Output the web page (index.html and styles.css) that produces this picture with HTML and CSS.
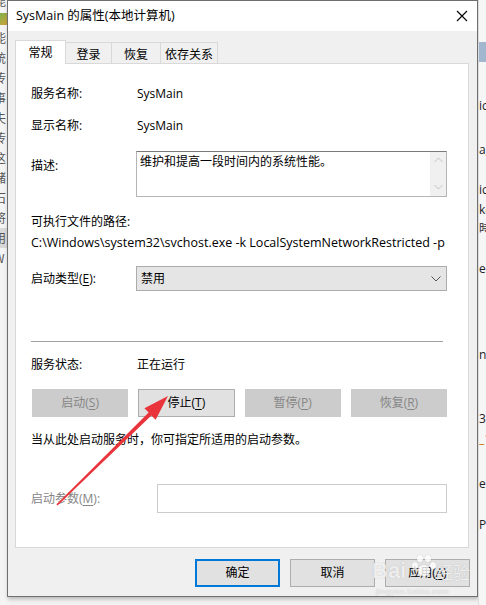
FILE: index.html
```html
<!DOCTYPE html>
<html lang="zh-CN">
<head>
<meta charset="utf-8">
<title>SysMain 的属性(本地计算机)</title>
<link rel="stylesheet" href="styles.css">
</head>
<body>
<div class="screen">
  <div class="bg-left">
    <div class="frag frag-top">能</div>
    <div class="frag-icon"></div>
    <div class="frag">能</div>
    <div class="frag">统</div>
    <div class="frag">传</div>
    <div class="frag">事</div>
    <div class="frag">夫</div>
    <div class="frag">传</div>
    <div class="frag">这</div>
    <div class="frag">储</div>
    <div class="frag">石</div>
    <div class="frag">将</div>
    <div class="frag frag-sel">用</div>
    <div class="frag">W</div>
  </div>

  <div class="dialog">
    <div class="titlebar">
      <span class="title">SysMain 的属性(本地计算机)</span>
      <svg class="close" width="12" height="12" viewBox="0 0 12 12"><path d="M1 1L11 11M11 1L1 11" stroke="#000" stroke-width="1.1" fill="none"/></svg>
    </div>
    <div class="body">
      <div class="tabs">
        <div class="tab tab-active tab-w51">常规</div>
        <div class="tab tab-w46">登录</div>
        <div class="tab tab-w49">恢复</div>
        <div class="tab tab-w57">依存关系</div>
      </div>
      <div class="panel">
        <div class="row r-name"><span class="label">服务名称:</span><span class="value">SysMain</span></div>
        <div class="row r-disp"><span class="label">显示名称:</span><span class="value">SysMain</span></div>
        <div class="row r-desc">
          <span class="label label-desc">描述:</span>
          <div class="textarea">
            <div class="ta-text">维护和提高一段时间内的系统性能。</div>
            <div class="ta-scroll">
              <svg width="9" height="6" viewBox="0 0 9 6"><path d="M0.5 5L4.5 1L8.5 5" stroke="#c2c2c2" fill="none"/></svg>
              <svg width="9" height="6" viewBox="0 0 9 6"><path d="M0.5 1L4.5 5L8.5 1" stroke="#c2c2c2" fill="none"/></svg>
            </div>
          </div>
        </div>
        <div class="row r-pathlabel">可执行文件的路径:</div>
        <div class="row r-path">C:\Windows\system32\svchost.exe -k LocalSystemNetworkRestricted -p</div>
        <div class="row r-type">
          <span class="label">启动类型(<u>E</u>):</span>
          <div class="select">
            <span>禁用</span>
            <svg width="10" height="6" viewBox="0 0 10 6"><path d="M0.5 0.5L5 5L9.5 0.5" stroke="#555" fill="none"/></svg>
          </div>
        </div>
        <div class="separator"></div>
        <div class="row r-status"><span class="label">服务状态:</span><span class="value">正在运行</span></div>
        <div class="btn-row">
          <div class="btn btn-disabled">启动(<u>S</u>)</div>
          <div class="btn">停止(<u>T</u>)</div>
          <div class="btn btn-disabled">暂停(<u>P</u>)</div>
          <div class="btn btn-disabled">恢复(<u>R</u>)</div>
        </div>
        <div class="row r-hint">当从此处启动服务时，你可指定所适用的启动参数。</div>
        <div class="row r-params">
          <span class="label label-params">启动参数(<u>M</u>):</span>
          <div class="input"></div>
        </div>
      </div>
      <div class="footer">
        <div class="btn btn-foot btn-default">确定</div>
        <div class="btn btn-foot">取消</div>
        <div class="btn btn-foot">应用(<u>A</u>)</div>
      </div>
    </div>
  </div>

  <div class="bg-right">
    <div class="rfrag rfrag-blue"></div>
    <div class="rfrag rf1">ic</div>
    <div class="rfrag rf2">ag</div>
    <div class="rfrag rf3">ic</div>
    <div class="rfrag rf4">ke</div>
    <div class="rfrag rf5">時</div>
    <div class="rfrag rf6">el</div>
    <div class="rfrag rf7">nc</div>
    <div class="rfrag rf8">3</div>
    <div class="rfrag rf9">_1</div>
    <div class="rfrag rf10">e</div>
    <div class="rfrag rf11">Pi</div>
  </div>
</div>

<svg class="arrow" width="486" height="605" viewBox="0 0 486 605">
  <polygon fill="#e8343a" points="56.4,504.4 148.6,412.6 144.4,408.3 168,396 155.6,419.7 151.4,415.4 57.6,505.6"/>
</svg>

<div class="watermark">
  <span class="wm-bai">Bai</span>
  <span class="wm-paw"><i></i><i></i><i></i><i></i><b></b></span>
  <span class="wm-jy">经验</span>
  <div class="wm-url">jingyan.baidu.com</div>
</div>
</body>
</html>
```

FILE: styles.css
```css
* { box-sizing: border-box; }

html, body {
  margin: 0;
  padding: 0;
}

body {
  width: 486px;
  height: 605px;
  overflow: hidden;
  background: #f2f2f2;
  font-family: "Open Sans", "Noto Sans CJK SC", sans-serif;
  font-size: 12px;
  color: #000;
  position: relative;
}

.screen {
  display: flex;
  height: 605px;
}

/* background app fragments */
.bg-left {
  width: 7px;
  flex: none;
  overflow: hidden;
  background: #f4f4f4;
  display: flex;
  flex-direction: column;
  font-family: "Noto Sans CJK SC", sans-serif;
  font-size: 12px;
  line-height: 20px;
  color: #555;
}
.frag {
  height: 20px;
  margin-left: -6px;
  white-space: nowrap;
}
.frag-top {
  height: 14px;
  line-height: 10px;
  margin-top: -4px;
}
.frag-icon {
  height: 12px;
  margin: 3px 0 3px 0;
  background: linear-gradient(135deg, #7bb24a, #d4a33a);
}
.frag-sel {
  background: #d9d9d9;
}

.bg-right {
  width: 8px;
  flex: none;
  position: relative;
  overflow: hidden;
  background: #f6f6f6;
  border-left: 1px solid #dcdcdc;
  font-family: "Open Sans", "Noto Sans CJK SC", sans-serif;
  font-size: 12px;
  color: #222;
}
.rfrag { position: absolute; left: 0; white-space: nowrap; line-height: 14px; }
.rfrag-blue { top: 42px; height: 20px; width: 8px; background: #a3b6d0; }
.rf1 { top: 99px; }
.rf2 { top: 143px; }
.rf3 { top: 183px; }
.rf4 { top: 203px; }
.rf5 { top: 222px; color: #333; }
.rf6 { top: 262px; }
.rf7 { top: 348px; }
.rf8 { top: 412px; }
.rf9 { top: 432px; color: #c07000; }
.rf10 { top: 477px; }
.rf11 { top: 518px; }

/* dialog */
.dialog {
  width: 471px;
  height: 597px;
  flex: none;
  border: 1px solid #6f6f6f;
  display: flex;
  flex-direction: column;
  background: #f0f0f0;
  box-shadow: 1px 2px 4px rgba(0,0,0,0.25);
}

.titlebar {
  height: 30px;
  flex: none;
  background: #fff;
  display: flex;
  align-items: center;
  justify-content: space-between;
  padding: 0 9px 0 8px;
}
.title {
  font-size: 12.5px;
  line-height: 16px;
  margin-top: -1px;
}
.close { display: block; }

.body {
  flex: 1;
  padding: 9px 8px 9px 7px;
  display: flex;
  flex-direction: column;
}

.tabs {
  height: 23px;
  display: flex;
  align-items: flex-end;
  position: relative;
  z-index: 1;
}
.tab {
  height: 21px;
  border: 1px solid #d9d9d9;
  border-bottom: none;
  border-left: none;
  background: #f0f0f0;
  display: flex;
  align-items: center;
  justify-content: center;
  font-family: "Noto Sans CJK SC", sans-serif;
  font-size: 12px;
  line-height: 16px;
  padding-top: 1px;
}
.tab-active {
  height: 24px;
  margin-bottom: -1px;
  background: #fff;
  border-left: 1px solid #d9d9d9;
  padding-top: 0;
  padding-bottom: 2px;
}
.tab-w51 { width: 51px; }
.tab-w46 { width: 46px; }
.tab-w49 { width: 49px; }
.tab-w57 { width: 57px; }

.panel {
  height: 485px;
  flex: none;
  background: #fff;
  border: 1px solid #d9d9d9;
  padding: 0 21px 0 15px;
  display: flex;
  flex-direction: column;
}

.row {
  display: flex;
  align-items: center;
  line-height: 20px;
  min-height: 20px;
  white-space: nowrap;
}
.label {
  width: 106px;
  flex: none;
}

.r-name { margin-top: 20px; }
.r-disp { margin-top: 12px; }
.r-desc { margin-top: 15px; align-items: flex-start; }
.label-desc { width: 105px; margin-top: 5px; }
.textarea {
  flex: 1;
  height: 46px;
  border: 1px solid #b5b5b5;
  border-top-color: #7a7a7a;
  display: flex;
}
.ta-text {
  flex: 1;
  padding: 2px 0 0 3px;
  line-height: 16px;
}
.ta-scroll {
  width: 16px;
  flex: none;
  background: #f0f0f0;
  display: flex;
  flex-direction: column;
  justify-content: space-between;
  align-items: center;
  padding: 5px 0 6px;
}
.ta-scroll svg { display: block; }

.r-pathlabel { margin-top: 15px; }
.r-path { margin-top: 1px; font-size: 12.5px; }

.r-type { margin-top: 13px; }
.r-type .label { width: 105px; }
.select {
  flex: 1;
  height: 25px;
  background: #e5e5e5;
  border: 1px solid #acacac;
  display: flex;
  align-items: center;
  justify-content: space-between;
  padding: 0 5px 0 4px;
}
.select svg { display: block; }

.separator {
  height: 1px;
  background: #a0a0a0;
  margin: 50px 4px 0 0;
  flex: none;
}

.r-status { margin-top: 13px; }

.btn-row {
  margin-top: 14px;
  display: grid;
  grid-template-columns: repeat(4, 1fr);
  column-gap: 10px;
  padding-left: 1px;
}
.btn {
  height: 28px;
  background: #e1e1e1;
  border: 1px solid #adadad;
  display: flex;
  align-items: center;
  justify-content: center;
  line-height: 16px;
  white-space: nowrap;
}
.btn-disabled {
  background: #cccccc;
  border-color: #cccccc;
  color: #868686;
}

.r-hint { margin-top: 13px; }

.r-params { margin-top: 34px; }
.label-params { width: 126px; color: #858585; }
.input {
  flex: 1;
  height: 29px;
  border: 1px solid #cccccc;
  background: #fff;
}

.footer {
  margin-top: 11px;
  display: flex;
  justify-content: flex-end;
  gap: 10px;
  margin-right: -1px;
}
.btn-foot { width: 85px; }
.btn-default {
  border: 2px solid #0078d7;
}

u { text-decoration-thickness: 1px; text-underline-offset: 2px; }

/* annotation overlay */
.arrow {
  position: absolute;
  left: 0;
  top: 0;
  pointer-events: none;
}

.watermark {
  position: absolute;
  left: 370px;
  top: 553px;
  width: 110px;
  height: 50px;
  pointer-events: none;
  color: rgba(255,255,255,0.8);
  text-shadow: 0 0 1px rgba(120,120,120,0.5);
  font-family: "Liberation Sans", sans-serif;
}
.wm-bai {
  position: absolute;
  left: 2px;
  top: 6px;
  font-size: 22px;
  font-weight: bold;
  line-height: 24px;
}
.wm-jy {
  position: absolute;
  left: 66px;
  top: 9px;
  font-family: "Noto Sans CJK SC", sans-serif;
  font-size: 17px;
  line-height: 20px;
}
.wm-paw {
  position: absolute;
  left: 42px;
  top: 0;
  width: 24px;
  height: 30px;
}
.wm-paw i, .wm-paw b {
  position: absolute;
  background: rgba(255,255,255,0.8);
  border-radius: 50%;
  box-shadow: 0 0 1px rgba(120,120,120,0.5);
}
.wm-paw i { width: 6px; height: 7px; }
.wm-paw i:nth-child(1) { left: 0; top: 9px; }
.wm-paw i:nth-child(2) { left: 5px; top: 2px; }
.wm-paw i:nth-child(3) { left: 13px; top: 2px; }
.wm-paw i:nth-child(4) { left: 18px; top: 9px; }
.wm-paw b { left: 6px; top: 12px; width: 12px; height: 11px; }
.wm-url {
  position: absolute;
  left: 6px;
  top: 34px;
  font-size: 8px;
  letter-spacing: 0.5px;
  color: rgba(255,255,255,0.7);
}
```
